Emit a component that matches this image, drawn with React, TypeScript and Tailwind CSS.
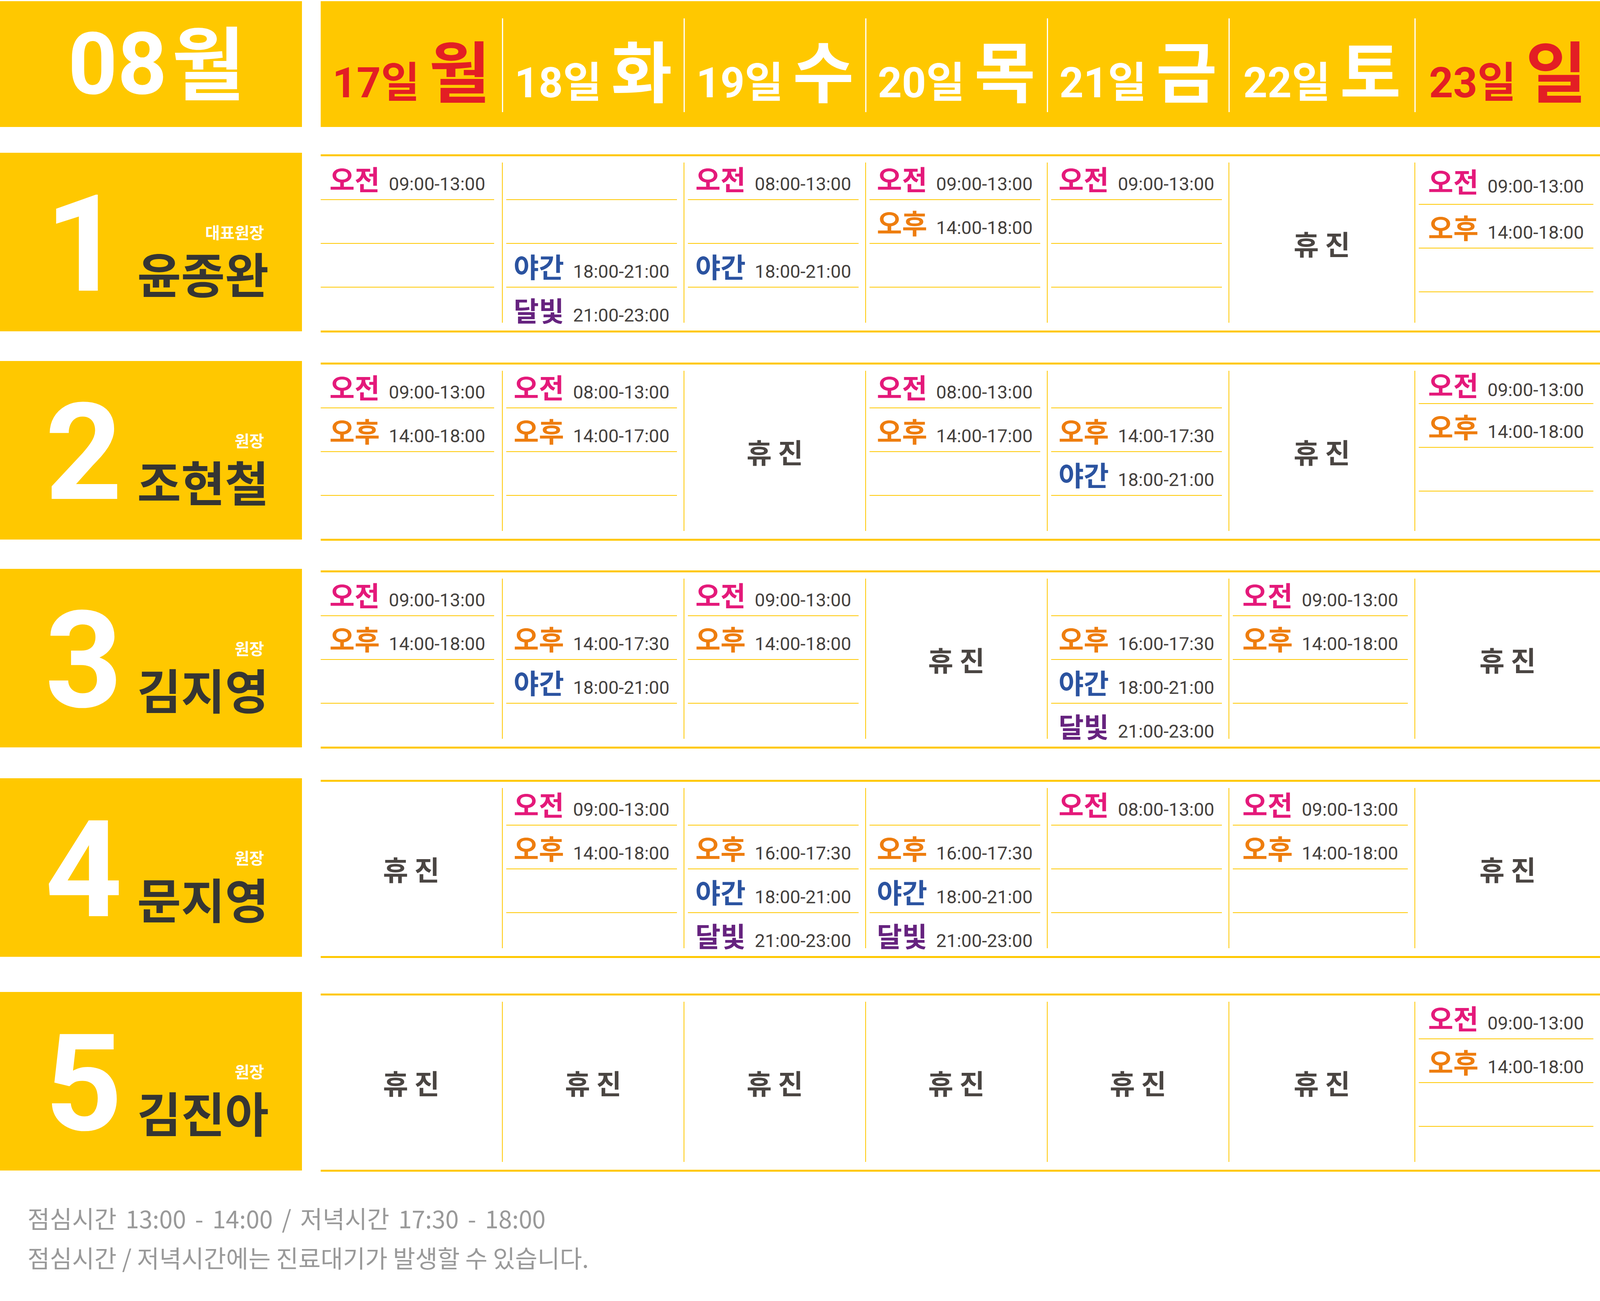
import React from "react"

type Kind = "am" | "pm" | "night" | "moon"
type Slot = { kind: Kind; time: string } | null
type Cell = "off" | { slots: Slot[]; first?: string }

const kindStyle: Record<Kind, { label: string; color: string }> = {
  am: { label: "오전", color: "text-[#e4197a]" },
  pm: { label: "오후", color: "text-[#ee7d0e]" },
  night: { label: "야간", color: "text-[#2b53a0]" },
  moon: { label: "달빛", color: "text-[#66237f]" },
}

const days = [
  { date: "17일", day: "월", red: true },
  { date: "18일", day: "화", red: false },
  { date: "19일", day: "수", red: false },
  { date: "20일", day: "목", red: false },
  { date: "21일", day: "금", red: false },
  { date: "22일", day: "토", red: false },
  { date: "23일", day: "일", red: true },
]

const am = (time: string): Slot => ({ kind: "am", time })
const pm = (time: string): Slot => ({ kind: "pm", time })
const night = (time: string): Slot => ({ kind: "night", time })
const moon = (time: string): Slot => ({ kind: "moon", time })
const s = (...slots: Slot[]): Cell => ({ slots })

const doctors: { no: string; title: string; name: string; mt: string; cells: Cell[] }[] = [
  {
    no: "1",
    title: "대표원장",
    name: "윤종완",
    mt: "mt-[66px]",
    cells: [
      s(am("09:00-13:00"), null, null, null),
      s(null, null, night("18:00-21:00"), moon("21:00-23:00")),
      s(am("08:00-13:00"), null, night("18:00-21:00"), null),
      s(am("09:00-13:00"), pm("14:00-18:00"), null, null),
      s(am("09:00-13:00"), null, null, null),
      "off",
      { slots: [am("09:00-13:00"), pm("14:00-18:00"), null, null], first: "h-[124px]" },
    ],
  },
  {
    no: "2",
    title: "원장",
    name: "조현철",
    mt: "mt-[73px]",
    cells: [
      s(am("09:00-13:00"), pm("14:00-18:00"), null, null),
      s(am("08:00-13:00"), pm("14:00-17:00"), null, null),
      "off",
      s(am("08:00-13:00"), pm("14:00-17:00"), null, null),
      s(null, pm("14:00-17:30"), night("18:00-21:00"), null),
      "off",
      { slots: [am("09:00-13:00"), pm("14:00-18:00"), null, null], first: "h-[101px]" },
    ],
  },
  {
    no: "3",
    title: "원장",
    name: "김지영",
    mt: "mt-[72px]",
    cells: [
      s(am("09:00-13:00"), pm("14:00-18:00"), null, null),
      s(null, pm("14:00-17:30"), night("18:00-21:00"), null),
      s(am("09:00-13:00"), pm("14:00-18:00"), null, null),
      "off",
      s(null, pm("16:00-17:30"), night("18:00-21:00"), moon("21:00-23:00")),
      s(am("09:00-13:00"), pm("14:00-18:00"), null, null),
      "off",
    ],
  },
  {
    no: "4",
    title: "원장",
    name: "문지영",
    mt: "mt-[76px]",
    cells: [
      "off",
      s(am("09:00-13:00"), pm("14:00-18:00"), null, null),
      s(null, pm("16:00-17:30"), night("18:00-21:00"), moon("21:00-23:00")),
      s(null, pm("16:00-17:30"), night("18:00-21:00"), moon("21:00-23:00")),
      s(am("08:00-13:00"), null, null, null),
      s(am("09:00-13:00"), pm("14:00-18:00"), null, null),
      "off",
    ],
  },
  {
    no: "5",
    title: "원장",
    name: "김진아",
    mt: "mt-[87px]",
    cells: ["off", "off", "off", "off", "off", "off", s(am("09:00-13:00"), pm("14:00-18:00"), null, null)],
  },
]

// 요일 컬럼 비율 (원본 포스터 기준)
const cols =
  "grid grid-cols-[minmax(0,493fr)_minmax(0,495fr)_minmax(0,494fr)_minmax(0,494fr)_minmax(0,495fr)_minmax(0,506fr)_minmax(0,505fr)]"

function DayCell({ cell, index }: { cell: Cell; index: number }) {
  return (
    <div className="flex min-w-0">
      {index > 0 && <div className="w-[2px] shrink-0 bg-[#ffc800] mt-[16px] mb-[20px]" />}
      {cell === "off" ? (
        <div className="flex-1 flex items-center justify-center text-[70px] leading-none font-bold text-[#4a4542]">
          휴 진
        </div>
      ) : (
        <div className={`flex-1 min-w-0 flex flex-col ${index === 0 ? "pr-[20px]" : "pl-[9px] pr-[17px]"}`}>
          {cell.slots.map((slot, i) => (
            <div
              key={i}
              className={`flex items-center justify-center ${
                i === 3 ? "flex-1" : `${i === 0 ? cell.first ?? "h-[112px]" : "h-[112px]"} border-b-2 border-[#ffc800]`
              }`}
            >
              {slot && (
                <div className="flex items-baseline gap-[23px] pt-[5px] whitespace-nowrap">
                  <span className={`text-[70px] leading-none font-bold ${kindStyle[slot.kind].color}`}>
                    {kindStyle[slot.kind].label}
                  </span>
                  <span className="font-['Roboto'] text-[47px] leading-none text-[#45413e]">{slot.time}</span>
                </div>
              )}
            </div>
          ))}
        </div>
      )}
    </div>
  )
}

export default function App() {
  return (
    <div className="w-full h-[3330px] bg-white pt-[3px] overflow-hidden font-['Noto_Sans_CJK_KR',sans-serif]">
      {/* 헤더 */}
      <div className="flex h-[322px]">
        <div className="w-[18.875%] shrink-0 bg-[#ffc800] flex items-start justify-center pl-[28px] pt-[46px] text-white font-bold">
          <div className="flex items-baseline">
            <span className="font-['Roboto'] text-[221px] leading-none">08</span>
            <span className="ml-[12px] text-[204px] leading-none">월</span>
          </div>
        </div>
        <div className={`flex-1 ml-[1.171%] bg-[#ffc800] ${cols}`}>
          {days.map((d, i) => (
            <div key={d.date} className="flex min-w-0">
              {i > 0 && <div className="w-[3px] shrink-0 bg-white mt-[44px] mb-[38px]" />}
              <div
                className={`flex-1 min-w-0 flex items-start justify-center pt-[87px] font-bold ${
                  d.red ? "text-[#e31e24]" : "text-white"
                }`}
              >
                <div className="flex items-baseline gap-[24px] whitespace-nowrap">
                  <span className="font-['Roboto','Noto_Sans_CJK_KR',sans-serif] text-[108px] leading-none">
                    {d.date}
                  </span>
                  <span className="text-[170px] leading-none">{d.day}</span>
                </div>
              </div>
            </div>
          ))}
        </div>
      </div>

      {/* 의료진 행 */}
      {doctors.map((doc) => (
        <div key={doc.no} className={`flex items-start ${doc.mt}`}>
          <div className="w-[18.875%] h-[457px] shrink-0 bg-[#ffc800] flex items-start">
            <div className="ml-[10%] w-[36.6%] mt-[63px] text-center text-white font-['Roboto'] font-bold text-[345px] leading-none">
              {doc.no}
            </div>
            <div className="flex-1 mt-[182px] pr-[11%] flex flex-col items-end">
              <div className="mr-[12px] text-white text-[41px] leading-none font-bold">{doc.title}</div>
              <div className="mt-[22px] text-[#353533] text-[122px] leading-none font-bold whitespace-nowrap">
                {doc.name}
              </div>
            </div>
          </div>
          <div className={`flex-1 ml-[1.171%] mt-[4px] h-[456px] border-y-[5px] border-[#ffc800] ${cols}`}>
            {doc.cells.map((cell, i) => (
              <DayCell key={i} cell={cell} index={i} />
            ))}
          </div>
        </div>
      ))}

      {/* 안내 */}
      <div className="mt-[68px] pl-[1.72%] text-[62px] leading-[101px] text-[#999999]">
        <p className="[word-spacing:9px]">점심시간 13:00 - 14:00 / 저녁시간 17:30 - 18:00</p>
        <p>점심시간 / 저녁시간에는 진료대기가 발생할 수 있습니다.</p>
      </div>
    </div>
  )
}
